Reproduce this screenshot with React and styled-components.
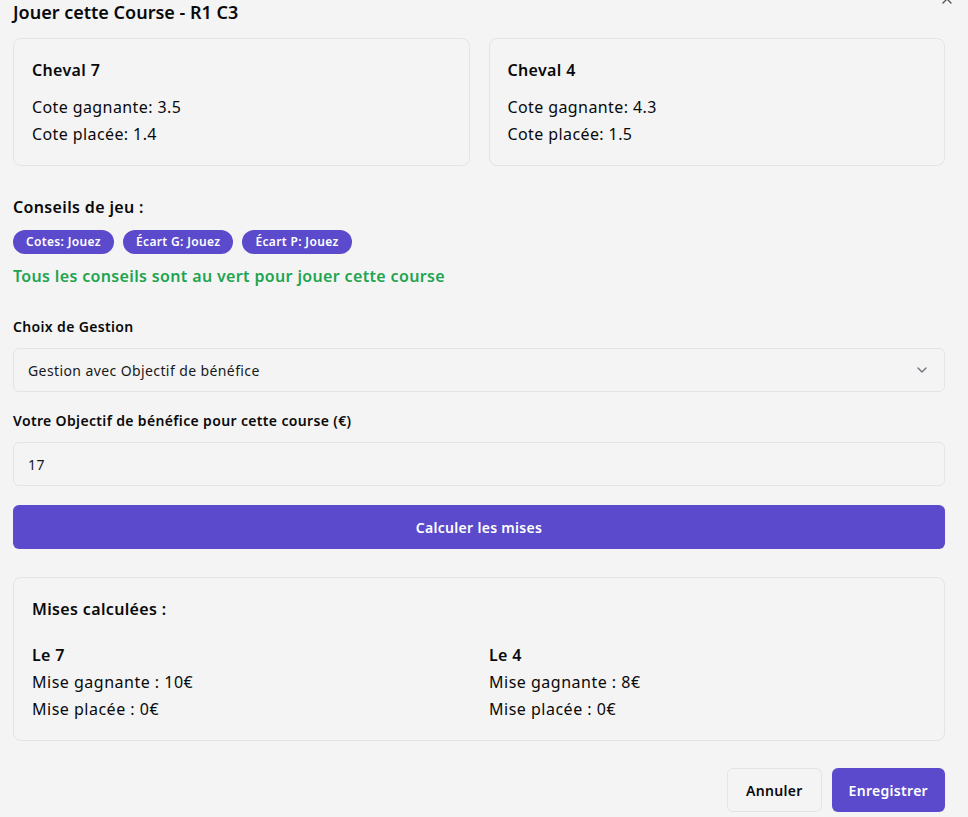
import React, { useState } from "react";
import styled, { createGlobalStyle } from "styled-components";
import { X, ChevronDown } from "lucide-react";

const GlobalStyle = createGlobalStyle`
  body {
    margin: 0;
    background: #f4f4f4;
    font-family: "Segoe UI", "Noto Sans", "Open Sans", sans-serif;
    color: #09090b;
    letter-spacing: 0.35px;
  }
`;

const Dialog = styled.div`
  width: 932px;
  margin-left: 13px;
  position: relative;
`;

const Title = styled.h2`
  margin: 0;
  font-size: 18px;
  line-height: 24px;
  font-weight: 600;
  letter-spacing: 0;
`;

const Close = styled.button`
  position: absolute;
  top: -9px;
  right: -10px;
  border: none;
  background: none;
  padding: 0;
  color: #52525b;
  display: flex;
`;

const HorseGrid = styled.div`
  display: grid;
  grid-template-columns: 1fr 1fr;
  gap: 19px;
  margin-top: 14px;
`;

const Card = styled.div`
  border: 1px solid #e4e4e7;
  border-radius: 8px;
  padding: 19px 18px ${(p) => p.$bottom || "17px"};
`;

const CardTitle = styled.div`
  font-size: 16px;
  font-weight: 600;
  line-height: 24px;
  margin-bottom: ${(p) => p.$gap || "0"};
`;

const Line = styled.div`
  font-size: 16px;
  line-height: 27px;
  letter-spacing: ${(p) => p.$ls || "0.4px"};
`;

const Section = styled.div`
  margin-top: ${(p) => p.$top || "0"};
`;

const SectionTitle = styled.div`
  font-size: 16px;
  font-weight: 600;
  line-height: 24px;
`;

const Badges = styled.div`
  display: flex;
  gap: 9px;
  margin-top: 11px;
`;

const Badge = styled.span`
  background: #5b4bcc;
  color: #fff;
  font-size: 12px;
  font-weight: 600;
  border-radius: 999px;
  padding: 0 13px;
  height: 24px;
  line-height: 24px;
  letter-spacing: 0.35px;
`;

const Success = styled.div`
  color: #1ea44f;
  font-size: 16px;
  font-weight: 600;
  line-height: 24px;
  margin-top: 10px;
`;

const Label = styled.label`
  display: block;
  font-size: 14px;
  font-weight: 600;
  line-height: 20px;
  margin-bottom: 11px;
`;

const Field = styled.div`
  height: 44px;
  box-sizing: border-box;
  border: 1px solid #e4e4e7;
  border-radius: 6px;
  display: flex;
  align-items: center;
  justify-content: space-between;
  padding: 0 14px;
  font-size: 14px;
  color: #18181b;
  letter-spacing: 0.4px;
`;

const Primary = styled.button`
  background: #5b4bcc;
  color: #fff;
  border: none;
  border-radius: 6px;
  height: 44px;
  font-family: inherit;
  font-size: 14px;
  font-weight: 600;
  letter-spacing: 0.3px;
  width: ${(p) => (p.$full ? "100%" : "auto")};
  padding: 0 17px;
`;

const Ghost = styled.button`
  background: #f4f4f4;
  color: #09090b;
  border: 1px solid #e4e4e7;
  border-radius: 6px;
  height: 44px;
  font-family: inherit;
  font-size: 14px;
  font-weight: 600;
  letter-spacing: 0.3px;
  padding: 0 18px;
`;

const ResultGrid = styled.div`
  display: grid;
  grid-template-columns: 1fr 1fr;
  column-gap: 20px;
  margin-top: 22px;
`;

const Footer = styled.div`
  display: flex;
  justify-content: flex-end;
  gap: 10px;
  margin-top: 27px;
`;

const horses = [
  { num: 7, win: "3.5", place: "1.4", stakeWin: "10€", stakePlace: "0€" },
  { num: 4, win: "4.3", place: "1.5", stakeWin: "8€", stakePlace: "0€" },
];

const App = () => {
  const [goal] = useState(17);
  return (
    <>
      <GlobalStyle />
      <Dialog>
        <Title>Jouer cette Course - R1 C3</Title>
        <Close>
          <X size={16} />
        </Close>

        <HorseGrid>
          {horses.map((h) => (
            <Card key={h.num}>
              <CardTitle $gap="12px">Cheval {h.num}</CardTitle>
              <Line>Cote gagnante: {h.win}</Line>
              <Line>Cote placée: {h.place}</Line>
            </Card>
          ))}
        </HorseGrid>

        <Section $top="29px">
          <SectionTitle>Conseils de jeu :</SectionTitle>
          <Badges>
            <Badge>Cotes: Jouez</Badge>
            <Badge>Écart G: Jouez</Badge>
            <Badge>Écart P: Jouez</Badge>
          </Badges>
          <Success>Tous les conseils sont au vert pour jouer cette course</Success>
        </Section>

        <Section $top="29px">
          <Label>Choix de Gestion</Label>
          <Field>
            Gestion avec Objectif de bénéfice
            <ChevronDown size={16} color="#71717a" />
          </Field>
        </Section>

        <Section $top="19px">
          <Label>Votre Objectif de bénéfice pour cette course (€)</Label>
          <Field>{goal}</Field>
        </Section>

        <Section $top="19px">
          <Primary $full>Calculer les mises</Primary>
        </Section>

        <Section $top="28px">
          <Card $bottom="17px">
            <CardTitle>Mises calculées :</CardTitle>
            <ResultGrid>
              {horses.map((h) => (
                <div key={h.num}>
                  <CardTitle $gap="2px">Le {h.num}</CardTitle>
                  <Line $ls="0.5px">Mise gagnante : {h.stakeWin}</Line>
                  <Line $ls="0.5px">Mise placée : {h.stakePlace}</Line>
                </div>
              ))}
            </ResultGrid>
          </Card>
        </Section>

        <Footer>
          <Ghost>Annuler</Ghost>
          <Primary>Enregistrer</Primary>
        </Footer>
      </Dialog>
    </>
  );
};

export default App;
